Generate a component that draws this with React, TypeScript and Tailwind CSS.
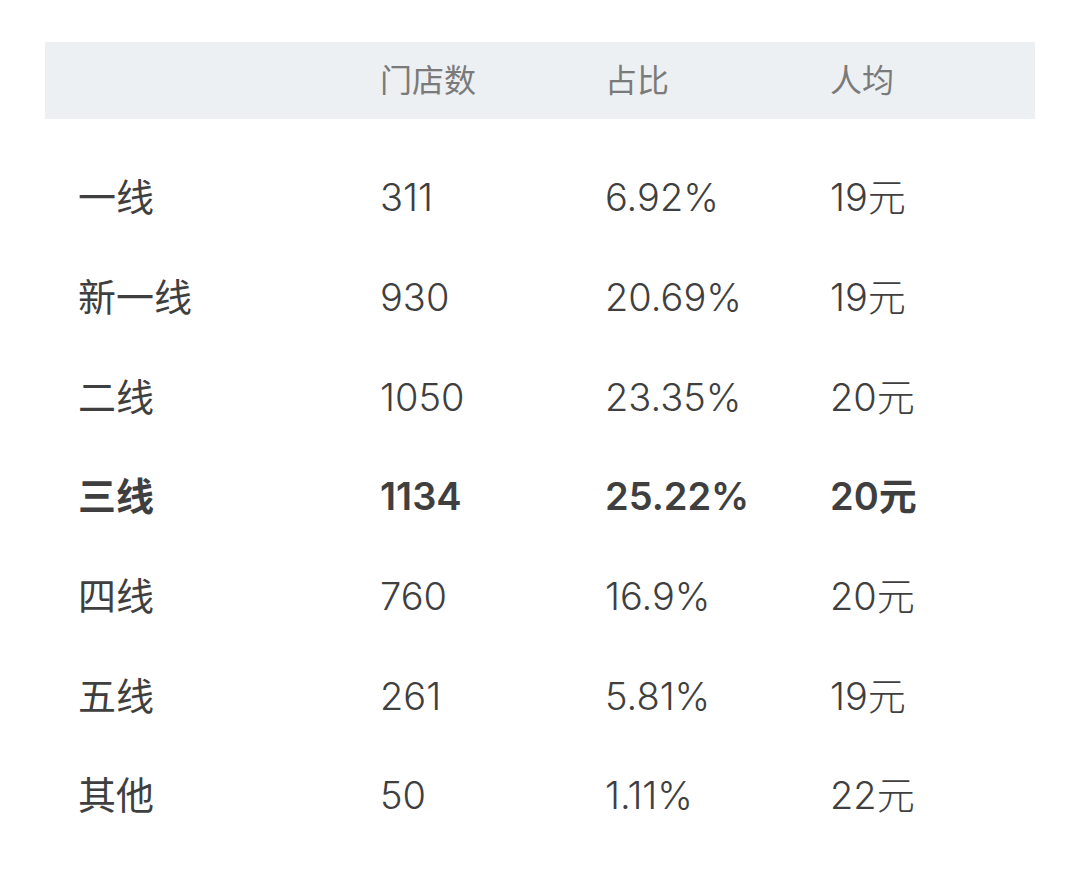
import React from "react";

const rows = [
  ["一线", "311", "6.92%", "19元", false],
  ["新一线", "930", "20.69%", "19元", false],
  ["二线", "1050", "23.35%", "20元", false],
  ["三线", "1134", "25.22%", "20元", true],
  ["四线", "760", "16.9%", "20元", false],
  ["五线", "261", "5.81%", "19元", false],
  ["其他", "50", "1.11%", "22元", false],
] as const;

export default function App() {
  return (
    <div
      className="w-[1080px] h-[870px] bg-white pt-[42px] pl-[45px]"
      style={{ fontFamily: 'Inter, "Noto Sans CJK SC", sans-serif' }}
    >
      <div className="w-[990px]">
        <div className="h-[77px] bg-[#edf0f3] grid grid-cols-[335px_225px_225px_1fr] items-center text-[32px] text-[#7a7a7a]">
          <div />
          <div>门店数</div>
          <div>占比</div>
          <div>人均</div>
        </div>
        <div className="mt-[29px]">
          {rows.map(([a, b, c, d, bold]) => (
            <div
              key={a}
              className={`h-[99.7px] grid grid-cols-[335px_225px_225px_1fr] items-center text-[38px] text-[#3f3f3f] ${bold ? "font-semibold" : "font-light"}`}
            >
              <div className={`pl-[33px] ${bold ? "" : "font-normal"}`}>{a}</div>
              <div>{b}</div>
              <div>{c}</div>
              <div>{d}</div>
            </div>
          ))}
        </div>
      </div>
    </div>
  );
}
